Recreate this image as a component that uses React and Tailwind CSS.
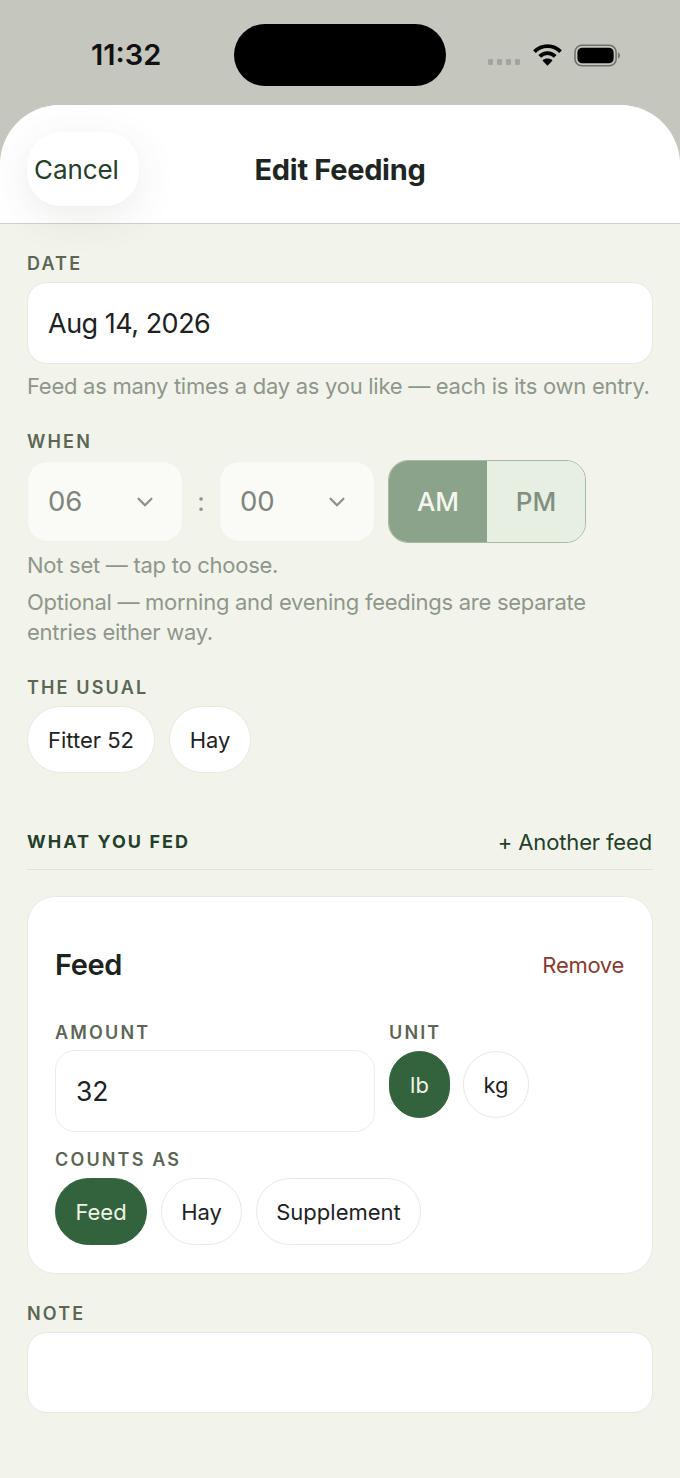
import React from 'react';
import { ChevronDown } from 'lucide-react';

const Label = ({ children, className = '' }) => (
  <div className={`h-[20px] text-[18px] leading-[20px] font-semibold tracking-[2.15px] text-[#5c6655] ${className}`}>
    {children}
  </div>
);

const Hint = ({ children, className = '' }) => (
  <p className={`text-[22px] leading-[30px] tracking-[-0.27px] text-[#8e978a] ${className}`}>{children}</p>
);

const Pill = ({ children, active, outlined, className = '' }) => (
  <div
    className={`h-[67px] pt-[1px] flex items-center justify-center rounded-[34px] text-[22px] border ${
      active ? 'bg-[#33633c] border-[#33633c] text-[#f1f3ea]' : 'bg-white text-[#1d231f]'
    } ${outlined ? 'border-[#e8e9e1]' : ''} ${className}`}
  >
    {children}
  </div>
);

const TimeSelect = ({ value }) => (
  <div className="w-[156px] h-[81px] rounded-[20px] bg-[#fafbf6] border border-[#f0f1e9] flex items-center justify-between pl-[20px] pr-[24px]">
    <span className="text-[27.5px] text-[#7f857b]">{value}</span>
    <ChevronDown size={26} strokeWidth={2} className="text-[#8a9086]" />
  </div>
);

export default function App() {
  return (
    <div className="w-[680px] h-[1478px] overflow-hidden bg-[#c5c6be] font-['Inter',sans-serif]">
      <div className="relative h-[105px] flex items-start justify-center pt-[24px]">
        <span className="absolute left-[91px] top-[37px] text-[29px] leading-[36px] font-semibold text-[#111]">11:32</span>
        <div className="w-[212px] h-[62px] rounded-[31px] bg-black" />
        <div className="absolute left-[488px] top-[42px] flex items-center">
          <svg width="34" height="26" viewBox="0 0 34 26">
            <rect x="0" y="17" width="5" height="6" rx="1" fill="#a3a49d" />
            <rect x="9" y="17" width="5" height="6" rx="1" fill="#a3a49d" />
            <rect x="18" y="17" width="5" height="6" rx="1" fill="#a3a49d" />
            <rect x="27" y="17" width="5" height="6" rx="1" fill="#a3a49d" />
          </svg>
          <svg width="29" height="24" viewBox="0 0 30 24" className="ml-[11px]">
            <path d="M1.5 8.5C9 1 21 1 28.5 8.5" fill="none" stroke="#000" strokeWidth="4" />
            <path d="M7 13.5C11.5 9 18.5 9 23 13.5" fill="none" stroke="#000" strokeWidth="4" />
            <path d="M15 23L9.8 17.6C12.6 15 17.4 15 20.2 17.6Z" fill="#000" />
          </svg>
          <svg width="47" height="24" viewBox="0 0 48 24" className="ml-[12px]">
            <rect x="1" y="2" width="42" height="21" rx="7" fill="none" stroke="#6f706a" strokeWidth="1.6" />
            <rect x="3.5" y="4.5" width="37" height="16" rx="5" fill="#000" />
            <path d="M45 9.5C46.5 10 47 11.5 47 12.5S46.5 15 45 15.5Z" fill="#6f706a" />
          </svg>
        </div>
      </div>

      <div className="h-[1373px] rounded-t-[60px] overflow-hidden bg-[#f2f4eb]">
        <header className="relative h-[119px] bg-white border-b border-[#cfd0ca] flex items-center justify-center pt-[11px]">
          <div className="absolute left-[27px] top-[27px] w-[112px] h-[74px] rounded-[34px] bg-white shadow-[0_10px_40px_rgba(60,70,50,0.1)] flex items-center pl-[7px] text-[26px] tracking-[-0.1px] text-[#24402a]">
            Cancel
          </div>
          <h1 className="text-[29px] font-bold tracking-[-0.3px] text-[#1d2621]">Edit Feeding</h1>
        </header>

        <main className="px-[27px] pt-[30px]">
          <Label>DATE</Label>
          <div className="mt-[8px] h-[82px] rounded-[20px] bg-white border border-[#e8e9e1] flex items-center pl-[20px] pt-[2px] text-[27px] tracking-[-0.5px] text-[#1d231f]">
            Aug 14, 2026
          </div>
          <Hint className="mt-[7px] whitespace-nowrap">Feed as many times a day as you like — each is its own entry.</Hint>

          <Label className="mt-[31px]">WHEN</Label>
          <div className="mt-[8px] flex items-center">
            <TimeSelect value="06" />
            <span className="w-[36px] text-center text-[26px] text-[#8e978a]">:</span>
            <TimeSelect value="00" />
            <div className="ml-[13px] w-[198px] h-[83px] rounded-[20px] overflow-hidden border border-[#a9b8a4] flex text-[26px] font-medium">
              <div className="w-[98px] bg-[#8aa38a] text-[#f4f6ef] flex items-center justify-center">AM</div>
              <div className="flex-1 bg-[#e7eee2] text-[#7f9080] flex items-center justify-center">PM</div>
            </div>
          </div>
          <Hint className="mt-[7px]">Not set — tap to choose.</Hint>
          <Hint className="mt-[7px] w-[620px]">Optional — morning and evening feedings are separate entries either way.</Hint>

          <Label className="mt-[31px]">THE USUAL</Label>
          <div className="mt-[8px] flex gap-[14px]">
            <Pill outlined className="w-[128px]">Fitter 52</Pill>
            <Pill outlined className="w-[82px]">Hay</Pill>
          </div>

          <div className="mt-[54px] h-[43px] border-b border-[#e2e4da] flex items-start justify-between">
            <span className="text-[18px] leading-[30px] font-bold tracking-[2.05px] text-[#24402a]">WHAT YOU FED</span>
            <span className="pr-[1px] text-[22px] leading-[30px] tracking-[-0.15px] text-[#24402a]">+ Another feed</span>
          </div>

          <section className="mt-[26px] h-[378px] rounded-[28px] bg-white border border-[#e8e9e1] px-[27px] pt-[48px]">
            <div className="flex items-center justify-between h-[40px]">
              <h2 className="text-[29px] font-semibold tracking-[-0.4px] text-[#1d231f]">Feed</h2>
              <span className="pr-[1px] text-[22px] tracking-[-0.3px] text-[#8a3a2e]">Remove</span>
            </div>
            <div className="mt-[38px] flex">
              <div className="w-[320px]">
                <Label>AMOUNT</Label>
                <div className="mt-[7px] h-[82px] rounded-[20px] bg-white border border-[#ecede6] flex items-center pl-[20px] pt-[1px] text-[26.5px] text-[#1d231f]">
                  32
                </div>
              </div>
              <div className="ml-[14px]">
                <Label>UNIT</Label>
                <div className="mt-[8px] flex gap-[13px]">
                  <Pill active className="w-[61px]">lb</Pill>
                  <Pill outlined className="w-[66px]">kg</Pill>
                </div>
              </div>
            </div>
            <Label className="mt-[18px]">COUNTS AS</Label>
            <div className="mt-[8px] flex gap-[14px]">
              <Pill active className="w-[92px]">Feed</Pill>
              <Pill outlined className="w-[81px]">Hay</Pill>
              <Pill outlined className="w-[165px]">Supplement</Pill>
            </div>
          </section>

          <Label className="mt-[30px]">NOTE</Label>
          <div className="mt-[8px] h-[81px] rounded-[20px] bg-white border border-[#e8e9e1]" />
        </main>
      </div>
    </div>
  );
}
